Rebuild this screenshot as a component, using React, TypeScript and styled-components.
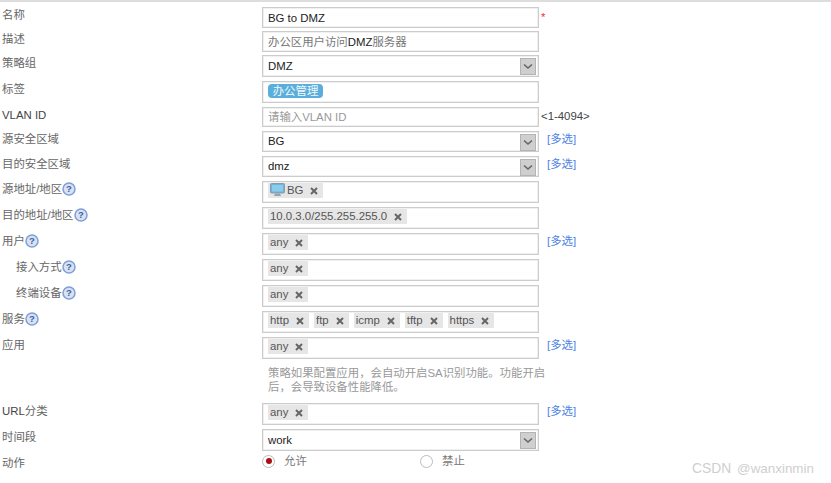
import React from 'react';
import styled, { createGlobalStyle } from 'styled-components';

const GlobalStyle = createGlobalStyle`
  html, body {
    margin: 0;
    padding: 0;
    background: #fff;
    overflow: hidden;
  }
  body {
    font-family: "Liberation Sans", "Noto Sans CJK SC", sans-serif;
    font-size: 11.4px;
    color: #666;
  }
`;

const Page = styled.div`
  position: relative;
  width: 831px;
  height: 483px;
  box-sizing: border-box;
  border-top: 2px solid #ddd;
  padding-top: 5px;
`;

const Row = styled.div<{ $height: number; $gap?: number }>`
  display: flex;
  height: ${p => p.$height}px;
  margin-bottom: ${p => p.$gap ?? 4}px;
`;

const Label = styled.div<{ $indent?: boolean }>`
  width: 262px;
  flex: none;
  box-sizing: border-box;
  padding-left: ${p => (p.$indent ? 16 : 2)}px;
  display: flex;
  align-items: flex-start;
  line-height: 16px;
  color: #666;
  .latin {
    color: #444;
  }
`;

const Field = styled.div<{ $raised?: boolean }>`
  width: 277px;
  flex: none;
  box-sizing: border-box;
  border: 1px solid #ccc;
  box-shadow: inset 0 0 0 0.5px #e2e2e2;
  display: flex;
  align-items: center;
  padding-left: 5px;
  padding-bottom: ${p => (p.$raised ? 2 : 0)}px;
  position: relative;
  color: #222;
  line-height: 16px;
`;

const TagField = styled(Field)`
  align-items: flex-start;
  padding-top: 1px;
  gap: 5px;
`;

const Cjk = styled.span`
  color: #777;
`;

const Placeholder = styled.span`
  color: #999;
`;

const ArrowButton = styled.span`
  position: absolute;
  right: 2px;
  top: 2px;
  width: 16px;
  height: 17px;
  box-sizing: border-box;
  background: #cfcfcf;
  border: 1px solid #b4b4b4;
  display: flex;
  align-items: center;
  justify-content: center;
`;

const Tag = styled.span`
  display: inline-flex;
  align-items: center;
  box-sizing: border-box;
  height: 15px;
  padding: 0 5px 1px 2px;
  background: #e6e6e6;
  color: #555;
  white-space: nowrap;
`;

const Remove = styled.span`
  display: inline-flex;
  margin-left: 7px;
  padding-top: 1px;
`;

const LabelTag = styled.span`
  display: inline-flex;
  align-items: center;
  justify-content: center;
  margin-top: 1px;
  width: 55px;
  height: 14px;
  border-radius: 4px;
  background: #5aaedb;
  color: #f2f8fc;
`;

const Aside = styled.div`
  padding-left: 2px;
  color: #444;
  line-height: 18px;
`;

const Required = styled.span`
  color: #e33;
  line-height: 20px;
`;

const MultiLink = styled.a`
  margin-left: 8px;
  color: #4c82e6;
  line-height: 16px;
  white-space: nowrap;
`;

const Note = styled.div`
  margin: 0 0 9px 268px;
  width: 285px;
  height: 28px;
  padding-top: 7px;
  line-height: 14px;
  color: #999;
`;

const RadioRow = styled.div`
  display: flex;
  height: 18px;
  align-items: flex-start;
`;

const RadioGroup = styled.div`
  width: 158px;
  display: flex;
  align-items: center;
  gap: 9px;
  color: #777;
  line-height: 14px;
`;

const RadioMark = styled.span<{ $on?: boolean }>`
  width: 13px;
  height: 13px;
  box-sizing: border-box;
  border-radius: 50%;
  border: 1px solid #bbb;
  background: #fff;
  display: flex;
  align-items: center;
  justify-content: center;
  &::after {
    content: '';
    width: 6px;
    height: 6px;
    border-radius: 50%;
    background: ${p => (p.$on ? '#a80f16' : 'transparent')};
  }
`;

const ActionLabel = styled(Label)`
  padding-top: 1px;
`;

const Watermark = styled.div`
  position: absolute;
  left: 692px;
  top: 459px;
  font-size: 13.8px;
  line-height: 16px;
  color: #cfcfcf;
  white-space: nowrap;
  span {
    margin-left: 6px;
    font-size: 13.4px;
  }
`;

const Help = () => (
  <svg width="14" height="14" viewBox="0 0 14 14" style={{ flex: 'none', marginTop: 1 }}>
    <circle cx="7" cy="7" r="6" fill="#d9e2f3" stroke="#7f9fd8" strokeWidth="1.5" />
    <text x="7" y="10.4" textAnchor="middle" fontSize="9.5" fontWeight="700" fontFamily="Liberation Sans" fill="#3d5f9e">?</text>
  </svg>
);

const Chevron = () => (
  <svg width="10" height="7" viewBox="0 0 10 7">
    <path d="M1 1.5 L5 5 L9 1.5" fill="none" stroke="#666" strokeWidth="1.6" />
  </svg>
);

const Cross = () => (
  <svg width="8" height="8" viewBox="0 0 8 8">
    <path d="M1 1 L7 7 M7 1 L1 7" stroke="#666" strokeWidth="2" />
  </svg>
);

const Monitor = () => (
  <svg width="15" height="14" viewBox="0 0 15 14" style={{ marginRight: 2 }}>
    <rect x="0.5" y="0.5" width="14" height="9.5" rx="1" fill="#6fb4dc" stroke="#8a9aa8" />
    <rect x="2" y="2" width="11" height="6.5" fill="#8ccbec" />
    <path d="M5 10.5 H10 L11 13 H4 Z" fill="#9aa3ab" />
  </svg>
);

const Chip = ({ children }: { children: React.ReactNode }) => (
  <Tag>
    {children}
    <Remove>
      <Cross />
    </Remove>
  </Tag>
);

const Select = ({ value, raised }: { value: string; raised?: boolean }) => (
  <Field $raised={raised}>
    {value}
    <ArrowButton>
      <Chevron />
    </ArrowButton>
  </Field>
);

const Multi = () => <MultiLink>[多选]</MultiLink>;

export default function App() {
  return (
    <Page>
      <GlobalStyle />
      <Row $height={21} $gap={3}>
        <Label>名称</Label>
        <Field>BG to DMZ</Field>
        <Aside>
          <Required>*</Required>
        </Aside>
      </Row>
      <Row $height={21} $gap={3}>
        <Label>描述</Label>
        <Field>
          <Cjk>办公区用户访问</Cjk>DMZ<Cjk>服务器</Cjk>
        </Field>
      </Row>
      <Row $height={22}>
        <Label>策略组</Label>
        <Select value="DMZ" />
      </Row>
      <Row $height={22}>
        <Label>标签</Label>
        <TagField>
          <LabelTag>办公管理</LabelTag>
        </TagField>
      </Row>
      <Row $height={20}>
        <Label>
          <span className="latin">VLAN ID</span>
        </Label>
        <Field>
          <Placeholder>请输入VLAN ID</Placeholder>
        </Field>
        <Aside>&lt;1-4094&gt;</Aside>
      </Row>
      <Row $height={21} $gap={4}>
        <Label>源安全区域</Label>
        <Select value="BG" raised />
        <Multi />
      </Row>
      <Row $height={21} $gap={4}>
        <Label>目的安全区域</Label>
        <Select value="dmz" raised />
        <Multi />
      </Row>
      <Row $height={22}>
        <Label>
          源地址/地区
          <Help />
        </Label>
        <TagField>
          <Chip>
            <Monitor />
            BG
          </Chip>
        </TagField>
      </Row>
      <Row $height={22}>
        <Label>
          目的地址/地区
          <Help />
        </Label>
        <TagField>
          <Chip>10.0.3.0/255.255.255.0</Chip>
        </TagField>
      </Row>
      <Row $height={22}>
        <Label>
          用户
          <Help />
        </Label>
        <TagField>
          <Chip>any</Chip>
        </TagField>
        <Multi />
      </Row>
      <Row $height={22}>
        <Label $indent>
          接入方式
          <Help />
        </Label>
        <TagField>
          <Chip>any</Chip>
        </TagField>
      </Row>
      <Row $height={22}>
        <Label $indent>
          终端设备
          <Help />
        </Label>
        <TagField>
          <Chip>any</Chip>
        </TagField>
      </Row>
      <Row $height={22}>
        <Label>
          服务
          <Help />
        </Label>
        <TagField>
          <Chip>http</Chip>
          <Chip>ftp</Chip>
          <Chip>icmp</Chip>
          <Chip>tftp</Chip>
          <Chip>https</Chip>
        </TagField>
      </Row>
      <Row $height={22} $gap={0}>
        <Label>应用</Label>
        <TagField>
          <Chip>any</Chip>
        </TagField>
        <Multi />
      </Row>
      <Note>
        策略如果配置应用，会自动开启SA识别功能。功能开启
        <br />
        后，会导致设备性能降低。
      </Note>
      <Row $height={22}>
        <Label>
          <span className="latin">URL</span>分类
        </Label>
        <TagField>
          <Chip>any</Chip>
        </TagField>
        <Multi />
      </Row>
      <Row $height={22} $gap={3}>
        <Label>时间段</Label>
        <Select value="work" />
      </Row>
      <RadioRow>
        <ActionLabel>动作</ActionLabel>
        <RadioGroup>
          <RadioMark $on />
          允许
        </RadioGroup>
        <RadioGroup>
          <RadioMark />
          禁止
        </RadioGroup>
      </RadioRow>
      <Watermark>
        CSDN<span>@wanxinmin</span>
      </Watermark>
    </Page>
  );
}
